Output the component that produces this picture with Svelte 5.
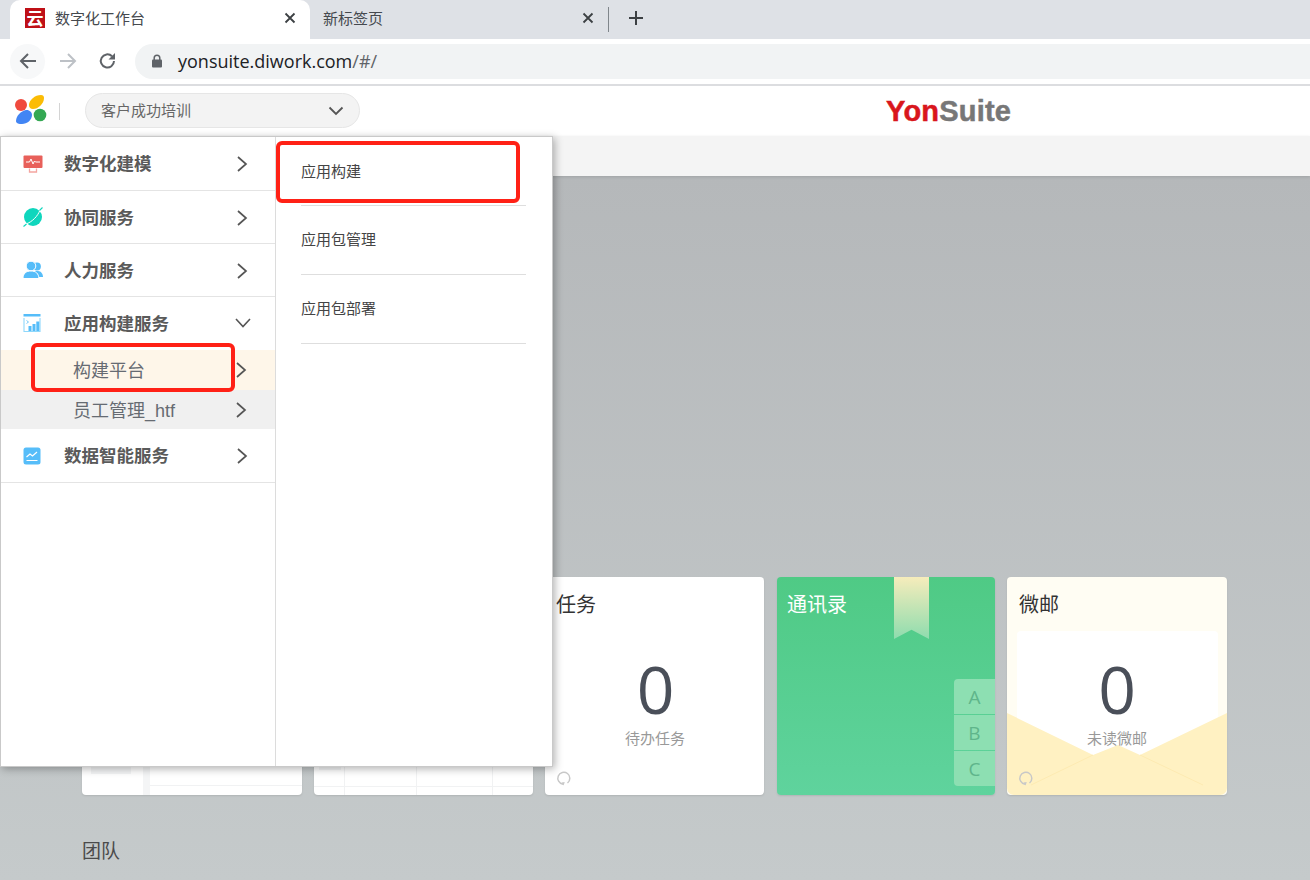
<script>
  const rows1 = [
    { name: '数字化建模', icon: 'monitor' },
    { name: '协同服务', icon: 'planet' },
    { name: '人力服务', icon: 'people' }
  ];
  const subs = ['应用构建', '应用包管理', '应用包部署'];
</script>

{#snippet chev()}
  <svg class="chev" width="12" height="18" viewBox="0 0 12 18"><path d="M2 2l8 7-8 7" fill="none" stroke="#555" stroke-width="1.7"/></svg>
{/snippet}

{#snippet refresh()}
  <svg class="refresh" width="16" height="16" viewBox="0 0 16 16"><path d="M7 14.2A6 6 0 1 1 11.5 13" fill="none" stroke="#c8c8c8" stroke-width="1.5"/><path d="M5.5 12.5l2.2 3 1-3.4z" fill="#c8c8c8"/></svg>
{/snippet}

<div class="page">
  <div class="tabstrip">
    <div class="tab active">
      <span class="favicon">云</span>
      <span class="tabtitle">数字化工作台</span>
      <svg class="x" width="12" height="12" viewBox="0 0 12 12"><path d="M1.5 1.5l9 9M10.5 1.5l-9 9" stroke="#3c4043" stroke-width="1.8"/></svg>
    </div>
    <div class="tab other">
      <span class="tabtitle">新标签页</span>
      <svg class="x" width="12" height="12" viewBox="0 0 12 12"><path d="M1.5 1.5l9 9M10.5 1.5l-9 9" stroke="#3c4043" stroke-width="1.8"/></svg>
    </div>
    <span class="tabsep"></span>
    <svg class="plus" width="16" height="16" viewBox="0 0 16 16"><path d="M8 1v14M1 8h14" stroke="#3c4043" stroke-width="2"/></svg>
  </div>

  <div class="toolbar">
    <span class="navbtn hover">
      <svg width="20" height="20" viewBox="0 0 20 20"><path d="M18 10H3M10 3l-7 7 7 7" fill="none" stroke="#5f6368" stroke-width="2"/></svg>
    </span>
    <span class="navbtn">
      <svg width="20" height="20" viewBox="0 0 20 20"><path d="M2 10h15M10 3l7 7-7 7" fill="none" stroke="#bdc1c6" stroke-width="2"/></svg>
    </span>
    <span class="navbtn">
      <svg width="20" height="20" viewBox="0 0 20 20"><path d="M16 10a6.6 6.6 0 1 1-2-4.8" fill="none" stroke="#5f6368" stroke-width="2"/><path d="M17 2v6.500h-6.500z" fill="#5f6368"/></svg>
    </span>
    <div class="omni">
      <svg width="12" height="14" viewBox="0 0 12 14"><path d="M3.200 6V4a2.800 2.800 0 0 1 5.600 0v2" fill="none" stroke="#5f6368" stroke-width="1.500"/><rect x="1" y="5.500" width="10" height="8" rx="1" fill="#5f6368"/></svg>
      <span class="url">yonsuite.diwork.com<span class="urlpath">/#/</span></span>
    </div>
  </div>

  <div class="apphead">
    <svg class="logo" width="32" height="30" viewBox="0 0 32 30">
      <circle cx="6" cy="10" r="6" fill="#f04a3e"/>
      <path d="M14 10c0-5 6-10 12-10 2 0 3 1 3 3 0 6-6 11-11 11-2.500 0-4-1.500-4-4z" fill="#fbbc05"/>
      <path d="M1 26c0-5 5-10 10-11 3-.5 6 2 6 5 0 5-5 9-10 9-3 0-6-.5-6-3z" fill="#4285f4"/>
      <circle cx="25" cy="20" r="6.300" fill="#34a853"/>
    </svg>
    <span class="vsep"></span>
    <div class="org">
      <span class="orgname">客户成功培训</span>
      <svg width="16" height="10" viewBox="0 0 16 10"><path d="M1.500 1.500l6.500 6.500 6.500-6.500" fill="none" stroke="#555" stroke-width="1.800"/></svg>
    </div>
    <div class="brand"><span class="yon">Yon</span><span class="suite">Suite</span></div>
  </div>

  <div class="subbar"></div>

  <main class="content">
    <div class="cards">
      <div class="card c1"><span class="sq"></span><span class="col"></span><span class="hl"></span></div>
      <div class="card c2"><span class="sq2"></span><span class="v v1"></span><span class="v v2"></span><span class="v v3"></span><span class="hl2"></span></div>
      <div class="card c3">
        <div class="ctitle">任务</div>
        <div class="num">0</div>
        <div class="cap">待办任务</div>
        {@render refresh()}
      </div>
      <div class="card c4">
        <div class="ctitle white">通讯录</div>
        <span class="ribbon"></span>
        <div class="abc"><span>A</span><span>B</span><span>C</span></div>
      </div>
      <div class="card c5">
        <div class="ctitle">微邮</div>
        <span class="sheet"></span>
        <svg class="env" width="220" height="82" viewBox="0 0 220 82">
          <path d="M0 0L86 42 111 32 133 42 220 0V75a7 7 0 0 1-7 7H7a7 7 0 0 1-7-7z" fill="#fff1c2"/>
          <path d="M24 72L86 42M196 72L133 42" stroke="#fdeab2" stroke-width="1" fill="none"/>
        </svg>
        <div class="num">0</div>
        <div class="cap">未读微邮</div>
        {@render refresh()}
      </div>
    </div>
    <div class="team">团队</div>
  </main>

  <div class="menu">
    <div class="mleft">
      {#each rows1 as r}
        <div class="row">
          <span class="ico">
            {#if r.icon === 'monitor'}
              <svg width="20" height="18" viewBox="0 0 20 18"><rect x="0.500" y="0.500" width="19" height="12.500" rx="1" fill="#e8605a"/><path d="M3 7h3.500l1.500-3 2 5 1.500-3 1 1H17" fill="none" stroke="#fff" stroke-width="1"/><path d="M6.500 13.500v3.500h7v-3.500" fill="none" stroke="#f4a5a0" stroke-width="1.300"/></svg>
            {:else if r.icon === 'planet'}
              <svg width="20" height="20" viewBox="0 0 20 20"><circle cx="10" cy="10" r="9" fill="#0fd6bd"/><path d="M3 17C9 15 15 9 17 3" fill="none" stroke="#fff" stroke-width="1"/><path d="M0.500 19.500l3-2.500M19.500 0.500l-3 3" stroke="#0fd6bd" stroke-width="1.100"/></svg>
            {:else}
              <svg width="20" height="18" viewBox="0 0 20 18"><circle cx="14" cy="5.500" r="3.900" fill="#56bdf9"/><path d="M12 10h3c3 0 5 3 5 6h-6z" fill="#56bdf9"/><circle cx="8" cy="5" r="4.800" fill="#56bdf9" stroke="#fff" stroke-width="1"/><path d="M0 17.500c0-5 3-7.500 8-7.500s7.500 2.500 8 7.500z" fill="#56bdf9" stroke="#fff" stroke-width="1"/></svg>
            {/if}
          </span>
          <span class="rname">{r.name}</span>
          {@render chev()}
        </div>
      {/each}
      <div class="row open">
        <span class="ico">
          <svg width="18" height="18" viewBox="0 0 18 18"><rect x="0.500" y="0" width="17" height="2.500" fill="#56bdf9"/><path d="M1 4v13.500h16V4" fill="none" stroke="#8fd8fb" stroke-width="1.100"/><path d="M3.500 6.500l2 1.500-2 1.500" fill="none" stroke="#56bdf9" stroke-width="0.800"/><rect x="5.500" y="12" width="3" height="5" fill="#56bdf9"/><rect x="9.500" y="10" width="3" height="7" fill="#56bdf9"/><rect x="13.300" y="7.500" width="3" height="9.500" fill="#56bdf9"/></svg>
        </span>
        <span class="rname">应用构建服务</span>
        <svg class="chevd" width="18" height="12" viewBox="0 0 18 12"><path d="M2 2l7 7.500L16 2" fill="none" stroke="#555" stroke-width="1.600"/></svg>
      </div>
      <div class="sub cream"><span>构建平台</span>{@render chev()}</div>
      <div class="sub grey"><span>员工管理_htf</span>{@render chev()}</div>
      <div class="row last">
        <span class="ico">
          <svg width="18" height="18" viewBox="0 0 18 18"><rect x="0.500" y="0.500" width="17" height="17" rx="2.500" fill="#56bdf9"/><path d="M3.500 10l3.500-3 2.500 2 4.500-4" fill="none" stroke="#fff" stroke-width="1.200"/><path d="M3.500 13.500h11" stroke="#fff" stroke-width="1"/></svg>
        </span>
        <span class="rname">数据智能服务</span>
        {@render chev()}
      </div>
    </div>
    <div class="mright">
      {#each subs as s}
        <div class="mitem"><span>{s}</span></div>
      {/each}
    </div>
    <span class="redbox rb1"></span>
    <span class="redbox rb2"></span>
  </div>
</div>

<style>
  :global(body) { margin: 0; background: #fff; }
  .page {
    position: relative;
    width: 1310px;
    height: 880px;
    overflow: hidden;
    display: flex;
    flex-direction: column;
    font-family: "Noto Sans CJK SC", "Noto Sans", sans-serif;
  }
  .tabstrip {
    height: 39px;
    flex: none;
    background: #dee1e6;
    display: flex;
    align-items: center;
    padding-left: 10px;
    box-sizing: border-box;
  }
  .tab {
    height: 39px;
    display: flex;
    align-items: center;
    box-sizing: border-box;
    font-size: 15px;
    color: #45494e;
    padding-bottom: 3px;
  }
  .tab.active {
    width: 300px;
    background: #fff;
    border-radius: 10px 10px 0 0;
    padding-left: 15px;
  }
  .tab.other { width: 299px; padding-left: 13px; }
  .favicon {
    width: 20px;
    height: 20px;
    background: #bf1017;
    color: #fff;
    font-size: 17px;
    font-weight: 700;
    line-height: 20px;
    text-align: center;
    margin-right: 10px;
    flex: none;
  }
  .tabtitle { flex: 1; white-space: nowrap; line-height: 20px; }
  .tab .x { margin-right: 14px; }
  .tab.other .x { margin-right: 15px; }
  .tabsep { width: 1px; height: 25px; background: #80868b; margin-left: -1px; }
  .plus { margin-left: 19px; margin-top: -3px; }
  .toolbar {
    height: 45px;
    flex: none;
    background: #fff;
    display: flex;
    align-items: center;
    padding-left: 10px;
    padding-bottom: 1px;
    box-sizing: border-box;
  }
  .navbtn {
    width: 35px;
    height: 35px;
    border-radius: 50%;
    display: flex;
    align-items: center;
    justify-content: center;
    margin-right: 5px;
  }
  .navbtn.hover { background: #f7f8f9; }
  .omni {
    flex: 1;
    height: 35px;
    margin-left: 5px;
    background: #f1f3f4;
    border-radius: 18px 0 0 18px;
    display: flex;
    align-items: center;
    padding-left: 16px;
    gap: 15px;
  }
  .url {
    font-family: "Open Sans", sans-serif;
    font-size: 18px;
    color: #202124;
    line-height: 24px;
  }
  .urlpath { color: #5f6368; }
  .apphead {
    height: 50px;
    flex: none;
    border-top: 2px solid #dcdde0;
    background: #fff;
    display: flex;
    align-items: center;
    position: relative;
    padding-left: 15px;
  }
  .logo { flex: none; margin-top: -2px; }
  .vsep { width: 1px; height: 17px; background: #d4d4d4; margin: 0 25px 0 12px; }
  .org {
    width: 275px;
    height: 35px;
    box-sizing: border-box;
    background: #f3f3f3;
    border: 1px solid #e6e6e6;
    border-radius: 18px;
    display: flex;
    align-items: center;
    justify-content: space-between;
    padding: 0 15px;
    font-size: 15px;
    color: #666;
    margin-top: -1px;
  }
  .orgname { margin-top: -2px; }
  .brand {
    position: absolute;
    left: 886px;
    top: 7px;
    font-family: "Liberation Sans", sans-serif;
    font-weight: 700;
    font-size: 29px;
    line-height: 36px;
    letter-spacing: 0.2px;
    -webkit-text-stroke: 0.5px currentColor;
    white-space: nowrap;
  }
  .yon { color: #d9161c; }
  .suite { color: #777; }
  .subbar {
    height: 40px;
    flex: none;
    background: #f4f4f4;
    box-shadow: 0 1px 3px rgba(0,0,0,.12);
    position: relative;
  }
  .content {
    flex: 1;
    background: linear-gradient(180deg, #b5b8ba 0%, #c5cacb 100%);
    padding: 401px 0 0 82px;
    box-sizing: border-box;
  }
  .cards {
    display: flex;
    gap: 12px;
    height: 218px;
  }
  .card {
    position: relative;
    background: #fff;
    border-radius: 4px;
    overflow: hidden;
    height: 218px;
    width: 219px;
    box-shadow: 0 1px 2px rgba(0,0,0,.1);
    flex: none;
  }
  .c1 { width: 220px; }
  .c4 { width: 218px; background: linear-gradient(180deg, #4fca85 0%, #5fd39d 100%); margin-left: 1px; }
  .c5 { width: 220px; background: #fffdf3; }
  .sq { position: absolute; left: 9px; top: 175px; width: 40px; height: 22px; background: #f4f5f6; }
  .col { position: absolute; left: 61px; top: 170px; width: 7px; height: 48px; background: #f4f5f6; }
  .hl { position: absolute; left: 68px; right: 0; top: 208px; height: 1px; background: #f1f2f3; }
  .sq2 { position: absolute; left: 5px; top: 175px; width: 22px; height: 18px; background: #f4f5f6; }
  .v { position: absolute; top: 170px; bottom: 0; width: 1px; background: #f1f2f3; }
  .v1 { left: 30px; }
  .v2 { left: 102px; }
  .v3 { left: 178px; }
  .hl2 { position: absolute; left: 0; right: 0; top: 209px; height: 1px; background: #f1f2f3; }
  .ctitle {
    position: absolute;
    left: 12px;
    top: 13px;
    font-size: 20px;
    line-height: 28px;
    color: #333;
  }
  .ctitle.white { left: 10px; color: #fff; }
  .num {
    position: absolute;
    left: 0;
    right: 0;
    top: 76px;
    text-align: center;
    font-family: "Open Sans", sans-serif;
    font-size: 66px;
    line-height: 70px;
    color: #4a4f59;
    z-index: 2;
  }
  .cap {
    position: absolute;
    left: 0;
    right: 0;
    top: 150px;
    text-align: center;
    font-size: 15px;
    line-height: 22px;
    color: #999;
    z-index: 2;
  }
  .c3 .ctitle { left: 11px; }
  .c3 .num { left: 2px; }
  .c3 .cap { left: 1px; }
  :global(.refresh) { position: absolute; left: 11px; top: 193px; z-index: 2; }
  .ribbon {
    position: absolute;
    left: 117px;
    top: 0;
    width: 35px;
    height: 62px;
    background: linear-gradient(180deg, #f6ecbb 0%, #8edcae 100%);
    clip-path: polygon(0 0, 100% 0, 100% 100%, 50% 85%, 0 100%);
  }
  .abc {
    position: absolute;
    right: 0;
    top: 102px;
    width: 41px;
    display: flex;
    flex-direction: column;
    gap: 1px;
    border-radius: 4px 0 0 4px;
    overflow: hidden;
  }
  .abc span {
    height: 35px;
    background: #8ddfb2;
    color: #5fb58b;
    font-family: "Open Sans", sans-serif;
    font-size: 19px;
    line-height: 36px;
    text-align: center;
  }
  .sheet {
    position: absolute;
    left: 10px;
    right: 9px;
    top: 54px;
    height: 140px;
    background: #fff;
    border-radius: 4px;
  }
  .env { position: absolute; left: 0; bottom: 0; z-index: 1; }
  .team {
    margin-top: 40px;
    font-size: 19px;
    line-height: 30px;
    color: #4a4a4a;
  }
  .menu {
    position: absolute;
    left: 0;
    top: 136px;
    width: 553px;
    height: 631px;
    box-sizing: border-box;
    background: #fff;
    border: 1px solid #c9c9c9;
    box-shadow: 2px 2px 8px rgba(0,0,0,.3);
    display: flex;
    z-index: 5;
  }
  .mleft {
    width: 275px;
    flex: none;
    border-right: 1px solid #dcdcdc;
    box-sizing: border-box;
  }
  .row {
    height: 53px;
    box-sizing: border-box;
    border-bottom: 1px solid #e4e4e4;
    display: flex;
    align-items: center;
    position: relative;
    padding-left: 63px;
  }
  .row:first-child, .row.last { height: 54px; }
  .row.open { border-bottom: 1px solid transparent; }
  .ico {
    position: absolute;
    left: 22px;
    top: 50%;
    transform: translateY(-50%);
    display: flex;
  }
  .rname {
    flex: 1;
    font-size: 17.5px;
    font-weight: 700;
    color: #5a5a5a;
    padding-bottom: 2px;
  }
  :global(.chev) { margin-right: 27px; flex: none; }
  .row :global(.chev) { margin-top: 2px; }
  .row:first-child :global(.chev), .row.last :global(.chev) { margin-top: 0; }
  .chevd { margin-right: 23px; flex: none; }
  .sub {
    display: flex;
    align-items: center;
    padding-left: 72px;
    font-family: "Liberation Sans", "Noto Sans CJK SC", sans-serif;
    font-size: 18px;
    color: #666b72;
  }
  .sub span { flex: 1; padding-bottom: 2px; }
  .sub :global(.chev) { margin-right: 28px; }
  .cream { height: 40px; background: #fef6e9; }
  .grey { height: 39px; background: #f0f0f0; }
  .mright {
    flex: 1;
    padding: 0 26px 0 25px;
    box-sizing: border-box;
  }
  .mitem {
    height: 69px;
    box-sizing: border-box;
    border-bottom: 1px solid #dedede;
    padding-bottom: 3px;
    display: flex;
    align-items: center;
    font-size: 15px;
    color: #444;
  }
  .mitem:first-child { padding-bottom: 1px; }
  .redbox {
    position: absolute;
    border: 4px solid #ff2116;
    border-radius: 6px;
    box-sizing: border-box;
    z-index: 6;
  }
  .rb1 { left: 275px; top: 4px; width: 244px; height: 62px; }
  .rb2 { left: 30px; top: 206px; width: 204px; height: 49px; }
</style>
